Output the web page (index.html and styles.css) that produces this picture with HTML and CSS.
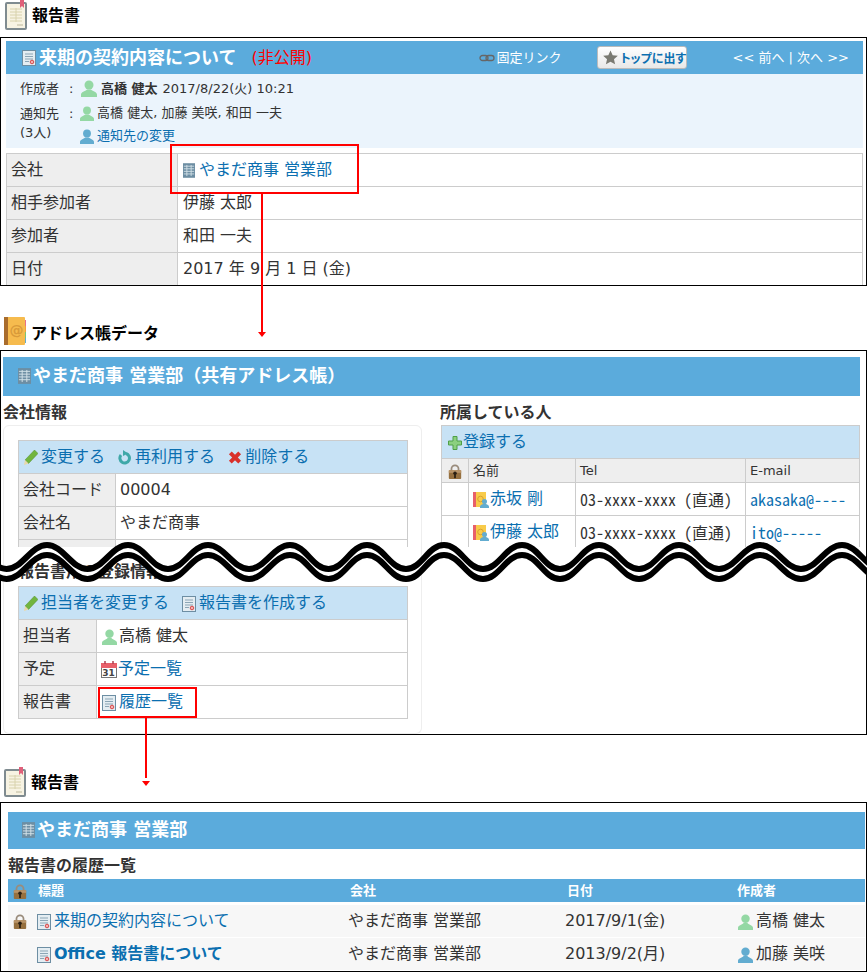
FILE: index.html
```html
<!DOCTYPE html>
<html lang="ja">
<head>
  <meta charset="UTF-8" />
  <meta name="viewport" content="width=device-width, initial-scale=1.0"/>
  <title>報告書とアドレス帳データ</title>
  <link rel="stylesheet" href="styles.css">
</head>
<body>

<svg class="icon-defs">
  <symbol id="i-report-lg" viewBox="0 0 22 30">
    <rect y="2" width="22" height="28" rx="2" fill="#7f8b90"/>
    <rect x="2" y="4" width="18" height="24" fill="#f7f3e3"/>
    <path d="M5 9h12M5 12h12M5 15h12M5 18h12M5 21h12M11 8v14" stroke="#d8d2ac" fill="none"/>
    <path d="M12 25h6" stroke="#bdb89c" fill="none"/>
    <path d="M15 0h4v8l-2-2-2 2z" fill="#e0607a"/>
  </symbol>
  <symbol id="i-book" viewBox="0 0 22 28">
    <rect width="21" height="28" rx="1" fill="#f6bb4e"/>
    <rect width="4" height="28" fill="#a96c2c"/>
    <rect x="21" y="3" width="1" height="6" fill="#e8708a"/>
    <rect x="21" y="9" width="1" height="6" fill="#f0a040"/>
    <rect x="21" y="15" width="1" height="6" fill="#7cc576"/>
    <rect x="21" y="21" width="1" height="5" fill="#62acd0"/>
    <text x="12.5" y="18" font-size="14" text-anchor="middle" fill="#d99a3a" font-family="DejaVu Sans">@</text>
  </symbol>
  <symbol id="i-report" viewBox="0 0 14 16">
    <rect x=".5" y=".5" width="13" height="15" fill="#e4edf2" stroke="#6d8ea3"/>
    <path d="M3 4h8M3 6.500h8M3 9h8M3 11.500h4" stroke="#8ba5b5" fill="none"/>
    <circle cx="10" cy="12" r="1.800" fill="#f3b0b0" stroke="#d84a4a"/>
  </symbol>
  <symbol id="i-building" viewBox="0 0 14 17">
    <rect width="14" height="17" fill="#6d8ea3"/>
    <path d="M1 3.500h12M1 6.500h12M1 9.500h12M1 12.500h12M4.500 2v13M9.500 2v13" stroke="#d6e4ea" fill="none"/>
  </symbol>
  <symbol id="i-user" viewBox="0 0 16 17">
    <circle cx="8" cy="5" r="4.500"/>
    <path d="M0 17v-2.500C0 12 4 11.500 6 9.500h4c2 2 6 2.500 6 5V17z"/>
  </symbol>
  <symbol id="i-pencil" viewBox="0 0 14 15">
    <path d="M10.500 0L14 3.500 4.500 13.500 1 10z" fill="#72b53e" stroke="#4f8f2a" stroke-width=".5"/>
    <path d="M1 10l3.500 3.500L0 15z" fill="#e8d8a8"/>
  </symbol>
  <symbol id="i-reuse" viewBox="0 0 14 15">
    <path d="M8 3.500a4.800 4.800 0 1 1-5 1.500" fill="none" stroke="#3fa8a8" stroke-width="3"/>
    <path d="M5 0l5 3.500L5 6z" fill="#3fa8a8"/>
  </symbol>
  <symbol id="i-del" viewBox="0 0 12 12">
    <path d="M2 2l8 8M10 2l-8 8" stroke="#d9302a" stroke-width="3.400" fill="none"/>
  </symbol>
  <symbol id="i-plus" viewBox="0 0 14 14">
    <path d="M5 .5h4v4.500h4.500v4H9v4.500H5V9H.5V5H5z" fill="#8bd07f" stroke="#4f9f48"/>
  </symbol>
  <symbol id="i-lock" viewBox="0 0 14 17">
    <path d="M3 8V5.500a4 4 0 0 1 8 0V8" fill="none" stroke="#9a8c7c" stroke-width="2"/>
    <rect y="7" width="14" height="10" rx="1" fill="#96703f"/>
    <rect y="7" width="14" height="3" fill="#b89468"/>
    <circle cx="7" cy="10.500" r="2" fill="#2c2114"/>
    <rect x="6" y="11" width="2" height="5" fill="#2c2114"/>
  </symbol>
  <symbol id="i-card" viewBox="0 0 16 16">
    <rect width="3" height="15" fill="#e8606a"/>
    <rect x="3" width="10" height="15" fill="#f8cb4a"/>
    <circle cx="7.500" cy="7" r="2.800" fill="none" stroke="#d9a22e"/>
    <circle cx="11.500" cy="9.500" r="2.500" fill="#62acd0"/>
    <path d="M7 16v-1.500c0-1.500 2.500-2 3.500-3h2c1 1 3.500 1.500 3.500 3V16z" fill="#62acd0"/>
  </symbol>
  <symbol id="i-cal" viewBox="0 0 16 17">
    <rect x=".5" y="2.500" width="15" height="14" fill="#fff" stroke="#777"/>
    <rect y="2" width="16" height="5" fill="#e8606a"/>
    <path d="M4 0v3M12 0v3" stroke="#b04050" stroke-width="1.500"/>
    <text x="7.500" y="15" font-size="9" font-weight="bold" text-anchor="middle" fill="#444" font-family="DejaVu Sans">31</text>
  </symbol>
  <symbol id="i-link" viewBox="0 0 16 8">
    <rect x="1" y="1.500" width="8" height="5" rx="2.500" fill="none" stroke="#666" stroke-width="1.300"/>
    <rect x="7" y="1.500" width="8" height="5" rx="2.500" fill="none" stroke="#666" stroke-width="1.300"/>
  </symbol>
  <symbol id="i-star" viewBox="0 0 16 16">
    <path d="M8 .5l2.300 5 5.500.6-4.100 3.700 1.200 5.500L8 12.500l-4.900 2.800 1.200-5.500L.2 6.100l5.500-.6z" fill="#7a7a72"/>
  </symbol>
</svg>

<!-- 報告書の詳細 -->
<h2 class="sec-title sec-first">
  <svg class="ico-lg"><use href="#i-report-lg"/></svg><span class="sec-text">報告書</span>
</h2>
<div class="box box-report">
  <div class="bar bar-report">
    <svg class="ico-report"><use href="#i-report"/></svg>
    <span class="bar-title">来期の契約内容について</span>
    <span class="private">(非公開)</span>
    <a class="permalink"><svg class="ico-link"><use href="#i-link"/></svg>固定リンク</a>
    <button class="btn-top"><svg class="ico-star"><use href="#i-star"/></svg>トップに出す</button>
    <span class="pager">&lt;&lt; 前へ | 次へ &gt;&gt;</span>
  </div>
  <div class="meta">
    <div class="meta-row meta-author">
      <span class="meta-label">作成者<span class="colon">:</span></span>
      <svg class="ico-user-md green"><use href="#i-user"/></svg>
      <strong class="author">高橋 健太</strong>
      <span>2017/8/22(火) 10:21</span>
    </div>
    <div class="meta-row">
      <div class="meta-label meta-label-notify">通知先<span class="colon">:</span><br>(3人)</div>
      <div class="meta-vals">
        <div class="meta-line"><svg class="ico-user-sm green"><use href="#i-user"/></svg>高橋 健太, 加藤 美咲, 和田 一夫</div>
        <div class="meta-line meta-change"><svg class="ico-user-sm blue"><use href="#i-user"/></svg><a>通知先の変更</a></div>
      </div>
    </div>
  </div>
  <table class="grid grid-report">
    <tr><th>会社</th><td><svg class="ico-building"><use href="#i-building"/></svg><a>やまだ商事 営業部</a></td></tr>
    <tr><th>相手参加者</th><td>伊藤 太郎</td></tr>
    <tr><th>参加者</th><td>和田 一夫</td></tr>
    <tr><th>日付</th><td>2017 年 9 月 1 日 (金)</td></tr>
  </table>
</div>

<!-- アドレス帳データ -->
<h2 class="sec-title sec-address">
  <svg class="ico-book"><use href="#i-book"/></svg><span class="sec-text">アドレス帳データ</span>
</h2>
<div class="box box-address">
  <div class="bar bar-address">
    <svg class="ico-building ico-building-w"><use href="#i-building"/></svg>
    <span class="bar-title">やまだ商事 営業部（共有アドレス帳）</span>
  </div>
  <div class="upper">
    <div class="col-left">
      <h3 class="sub-title">会社情報</h3>
      <div class="panel">
        <table class="grid grid-company">
          <colgroup><col class="col-company-label"><col></colgroup>
          <tr><td class="actions" colspan="2">
            <a><svg class="ico-act"><use href="#i-pencil"/></svg>変更する</a>
            <a><svg class="ico-act"><use href="#i-reuse"/></svg>再利用する</a>
            <a><svg class="ico-act"><use href="#i-del"/></svg>削除する</a>
          </td></tr>
          <tr><th>会社コード</th><td>00004</td></tr>
          <tr><th>会社名</th><td>やまだ商事</td></tr>
          <tr><th>よみ</th><td>やまだしょうじ</td></tr>
        </table>
      </div>
    </div>
    <div class="col-right">
      <h3 class="sub-title">所属している人</h3>
      <table class="grid grid-people">
        <colgroup><col class="col-lock"><col class="col-name"><col class="col-tel"><col></colgroup>
        <tr><td class="actions" colspan="4"><a><svg class="ico-plus"><use href="#i-plus"/></svg>登録する</a></td></tr>
        <tr class="people-head">
          <th class="lock-cell"><svg class="ico-lock"><use href="#i-lock"/></svg></th>
          <th>名前</th><th>Tel</th><th>E-mail</th>
        </tr>
        <tr>
          <td></td>
          <td><svg class="ico-card"><use href="#i-card"/></svg><a>赤坂 剛</a></td>
          <td class="mono">03-xxxx-xxxx （直通）</td>
          <td class="mono"><a>akasaka@----</a></td>
        </tr>
        <tr>
          <td></td>
          <td><svg class="ico-card"><use href="#i-card"/></svg><a>伊藤 太郎</a></td>
          <td class="mono">03-xxxx-xxxx （直通）</td>
          <td class="mono"><a>ito@-----</a></td>
        </tr>
      </table>
    </div>
  </div>
  <div class="panel panel-lower">
    <h3 class="sub-title">報告書用の登録情報</h3>
    <table class="grid grid-links">
      <colgroup><col class="col-links-label"><col></colgroup>
      <tr><td class="actions" colspan="2">
        <a><svg class="ico-act"><use href="#i-pencil"/></svg>担当者を変更する</a>
        <a><svg class="ico-report-md"><use href="#i-report"/></svg>報告書を作成する</a>
      </td></tr>
      <tr><th>担当者</th><td><svg class="ico-user-row green"><use href="#i-user"/></svg>高橋 健太</td></tr>
      <tr><th>予定</th><td><svg class="ico-cal"><use href="#i-cal"/></svg><a>予定一覧</a></td></tr>
      <tr><th>報告書</th><td><svg class="ico-report-md ico-tight"><use href="#i-report"/></svg><a>履歴一覧</a></td></tr>
    </table>
  </div>
</div>

<!-- 報告書の履歴 -->
<h2 class="sec-title sec-history">
  <svg class="ico-lg"><use href="#i-report-lg"/></svg><span class="sec-text">報告書</span>
</h2>
<div class="box box-history">
  <div class="bar bar-history">
    <svg class="ico-building ico-building-w"><use href="#i-building"/></svg>
    <span class="bar-title">やまだ商事 営業部</span>
  </div>
  <h3 class="sub-title">報告書の履歴一覧</h3>
  <div class="hist-head">
    <span><svg class="ico-lock"><use href="#i-lock"/></svg></span>
    <span>標題</span><span>会社</span><span>日付</span><span>作成者</span>
  </div>
  <div class="hist-row">
    <span><svg class="ico-lock"><use href="#i-lock"/></svg></span>
    <span><svg class="ico-report-md ico-tight"><use href="#i-report"/></svg><a>来期の契約内容について</a></span>
    <span>やまだ商事 営業部</span>
    <span>2017/9/1(金)</span>
    <span><svg class="ico-user-row green"><use href="#i-user"/></svg>高橋 健太</span>
  </div>
  <div class="hist-row">
    <span></span>
    <span><svg class="ico-report-md ico-tight"><use href="#i-report"/></svg><a class="unread">Office 報告書について</a></span>
    <span>やまだ商事 営業部</span>
    <span>2013/9/2(月)</span>
    <span><svg class="ico-user-row blue"><use href="#i-user"/></svg>加藤 美咲</span>
  </div>
</div>

<!-- 赤い枠と矢印、波線 -->
<svg class="marks" viewBox="0 0 867 972">
  <g fill="none" stroke="#f00" stroke-width="2">
    <rect x="171" y="145" width="187" height="48"/>
    <path d="M262 193V332"/>
    <rect x="99" y="688" width="97" height="29"/>
    <path d="M146 717V778"/>
  </g>
  <path d="M258 332h8l-4 5zM142 781h8l-4 5z" fill="#f00"/>
  <defs>
    <path id="wave" d="M-34 10C-18 10-9.500 34 6.500 34S31 10 47 10S71.500 34 87.500 34S112 10 128 10S152 34 168 34S192 10 208 10S233 34 249 34S274 10 290 10S312.500 34 328.500 34S351 10 367 10S390 34 406 34S428 10 444 10S467 34 483 34S506 10 522 10S544 34 560 34S583 10 599 10S623 34 639 34S663 10 679 10S703 34 719 34S744 10 760 10S785 34 801 34S826 10 842 10S866 34 882 34"/>
  </defs>
  <g transform="translate(0 535)" fill="none">
    <use href="#wave" y="5" stroke="#fff" stroke-width="10"/>
    <use href="#wave" stroke="#000" stroke-width="6"/>
    <use href="#wave" y="10" stroke="#000" stroke-width="6"/>
  </g>
</svg>

</body>
</html>
```

FILE: styles.css
```css
* {
  box-sizing: border-box;
}
body {
  position: relative;
  width: 867px;
  height: 972px;
  margin: 0;
  overflow: hidden;
  background-color: white;
  color: #333;
  font-family: "DejaVu Sans", "Noto Sans CJK JP", sans-serif;
  font-size: 16px;
  line-height: 20px;
}
a {
  color: #0b6fb0;
  text-decoration: none;
}
svg {
  flex: none;
  vertical-align: middle;
}
.icon-defs {
  display: none;
}
.marks {
  position: absolute;
  top: 0;
  left: 0;
  width: 867px;
  height: 972px;
  pointer-events: none;
}

/* section titles */
.sec-title {
  display: flex;
  align-items: center;
  margin: 0;
  color: black;
  font-size: 16px;
  font-weight: bold;
}
.sec-text {
  padding-top: 2px;
}
.sec-first {
  height: 37px;
  padding: 0 0 7px 5px;
}
.sec-address {
  height: 64px;
  padding: 31px 0 5px 4px;
}
.sec-address .sec-text {
  padding-top: 6px;
}
.sec-history {
  height: 67px;
  padding: 32px 0 6px 4px;
}
.ico-lg {
  width: 22px;
  height: 30px;
  margin-right: 5px;
}
.ico-book {
  width: 22px;
  height: 28px;
  margin-right: 5px;
}

/* outlined boxes */
.box {
  width: 867px;
  border: 1px solid black;
  overflow: hidden;
}
.box-report {
  height: 249px;
  padding: 3px 3px 0 5px;
}
.box-address {
  height: 385px;
  padding: 6px 6px 0 2px;
}
.box-history {
  height: 170px;
  padding: 9px 1px 0 7px;
}

/* blue title bars */
.bar {
  display: flex;
  align-items: center;
  background-color: #5babdc;
  color: white;
}
.bar-title {
  font-size: 18px;
  font-weight: bold;
}
.bar-report {
  height: 33px;
  padding: 0 14px 0 16px;
}
.bar-address {
  height: 39px;
  padding: 0 0 2px 15px;
}
.bar-history {
  height: 37px;
  padding: 0 0 2px 14px;
}
.ico-report {
  width: 14px;
  height: 16px;
  margin-right: 3px;
}
.private {
  margin-left: 15px;
  color: #f00;
}
.permalink {
  display: flex;
  align-items: center;
  margin-left: auto;
  color: white;
  font-size: 13px;
}
.ico-link {
  width: 16px;
  height: 8px;
  margin-right: 2px;
}
.btn-top {
  display: flex;
  align-items: center;
  width: 90px;
  height: 23px;
  margin-left: 35px;
  padding: 0 0 0 5px;
  border: 1px solid #bbb;
  border-radius: 3px;
  background: linear-gradient(#fff, #e8e8e8);
  color: #0b6fb0;
  font-family: inherit;
  font-size: 12px;
  font-weight: bold;
  font-feature-settings: "palt";
  white-space: nowrap;
}
.ico-star {
  width: 15px;
  height: 15px;
  margin-right: 3px;
}
.pager {
  margin-left: 46px;
  font-size: 13px;
}

/* meta block under the first bar */
.meta {
  height: 74px;
  margin-bottom: 5px;
  padding: 2px 0 0 14px;
  background-color: #ebf4fc;
  font-size: 13px;
}
.meta-row {
  display: flex;
}
.meta-author {
  align-items: center;
  height: 25px;
}
.meta-label {
  width: 60px;
  line-height: 19px;
}
.meta-label-notify {
  padding-top: 3px;
}
.colon {
  margin-left: 10px;
}
.meta-line {
  display: flex;
  align-items: center;
  height: 24px;
}
.meta-change {
  height: 22px;
}
.ico-user-md {
  width: 16px;
  height: 17px;
  margin: 0 4px 0 1px;
}
.ico-user-sm {
  width: 14px;
  height: 15px;
  margin-right: 3px;
}
.author {
  margin-right: 5px;
}
.green {
  fill: #94d8a4;
}
.blue {
  fill: #62acd0;
}

/* bordered tables */
.grid {
  border-collapse: collapse;
  table-layout: fixed;
}
.grid tr {
  height: 33px;
}
.grid th,
.grid td {
  padding: 0 0 0 4px;
  border: 1px solid #ccc;
  font-weight: normal;
  text-align: left;
  white-space: nowrap;
}
.grid th {
  background-color: #eee;
}
.grid .actions {
  background-color: #c7e2f5;
  padding-left: 5px;
}
.actions a {
  margin-right: 8px;
}
.grid-report {
  width: 857px;
}
.grid-report th {
  width: 171px;
}
.grid-report td {
  padding-left: 5px;
}
.ico-building {
  width: 12px;
  height: 15px;
  margin-right: 4px;
}
.ico-building-w {
  width: 13px;
  height: 16px;
  margin-right: 2px;
}
.ico-act {
  width: 14px;
  height: 15px;
  margin: 0 3px 0 0;
}
.ico-plus {
  width: 14px;
  height: 14px;
  margin: 0 1px 0 1px;
}
.ico-report-md {
  width: 14px;
  height: 16px;
  margin-right: 3px;
}
.ico-tight {
  margin-left: 1px;
}
.ico-user-row {
  width: 15px;
  height: 16px;
  margin: 0 3px 0 1px;
}
.grid-links .ico-user-row {
  margin-right: 2px;
}
.ico-cal {
  width: 16px;
  height: 17px;
  margin-right: 1px;
}

/* address book columns */
.upper {
  display: flex;
  height: 151px;
  overflow: hidden;
}
.col-left {
  width: 419px;
}
.col-right {
  margin-left: 18px;
}
.sub-title {
  height: 29px;
  margin: 0;
  padding-top: 7px;
  font-size: 16px;
  font-weight: bold;
  white-space: nowrap;
}
.panel {
  height: 200px;
  padding: 14px;
  border: 1px solid #eee;
  border-radius: 6px;
}
.panel-lower {
  width: 419px;
  height: 187px;
  padding: 0 14px;
  border-top: none;
  border-radius: 0 0 6px 6px;
}
.panel-lower .sub-title {
  height: 39px;
  padding-top: 15px;
}
.grid-company {
  width: 390px;
}
.col-company-label {
  width: 97px;
}
.grid-links {
  width: 390px;
}
.col-links-label {
  width: 78px;
}
.grid-people {
  width: 419px;
  margin-left: 1px;
}
.grid-people .people-head {
  height: 24px;
  font-size: 13px;
}
.col-lock {
  width: 27px;
}
.col-name {
  width: 107px;
}
.col-tel {
  width: 170px;
}
.grid-people .lock-cell {
  padding: 0 0 0 6px;
}
.ico-lock {
  width: 14px;
  height: 15px;
}
.ico-card {
  width: 16px;
  height: 16px;
  margin-right: 1px;
}
.mono {
  font-family: "Noto Sans CJK JP", sans-serif;
  font-feature-settings: "hwid";
  font-weight: 300;
}

/* report history list */
.box-history .sub-title {
  height: 30px;
  padding-top: 7px;
}
.hist-head,
.hist-row {
  display: grid;
  align-items: center;
}
.hist-head {
  grid-template-columns: 30px 312px 217px 170px 1fr;
  height: 23px;
  margin-bottom: 3px;
  background-color: #5babdc;
  color: white;
  font-size: 13px;
  font-weight: bold;
}
.hist-head span:first-child,
.hist-row span:first-child {
  padding-left: 5px;
}
.hist-row {
  grid-template-columns: 28px 312px 217px 172px 1fr;
  height: 32px;
  margin-bottom: 1px;
  background-color: #f7f7f7;
}
.unread {
  font-weight: bold;
}
```
